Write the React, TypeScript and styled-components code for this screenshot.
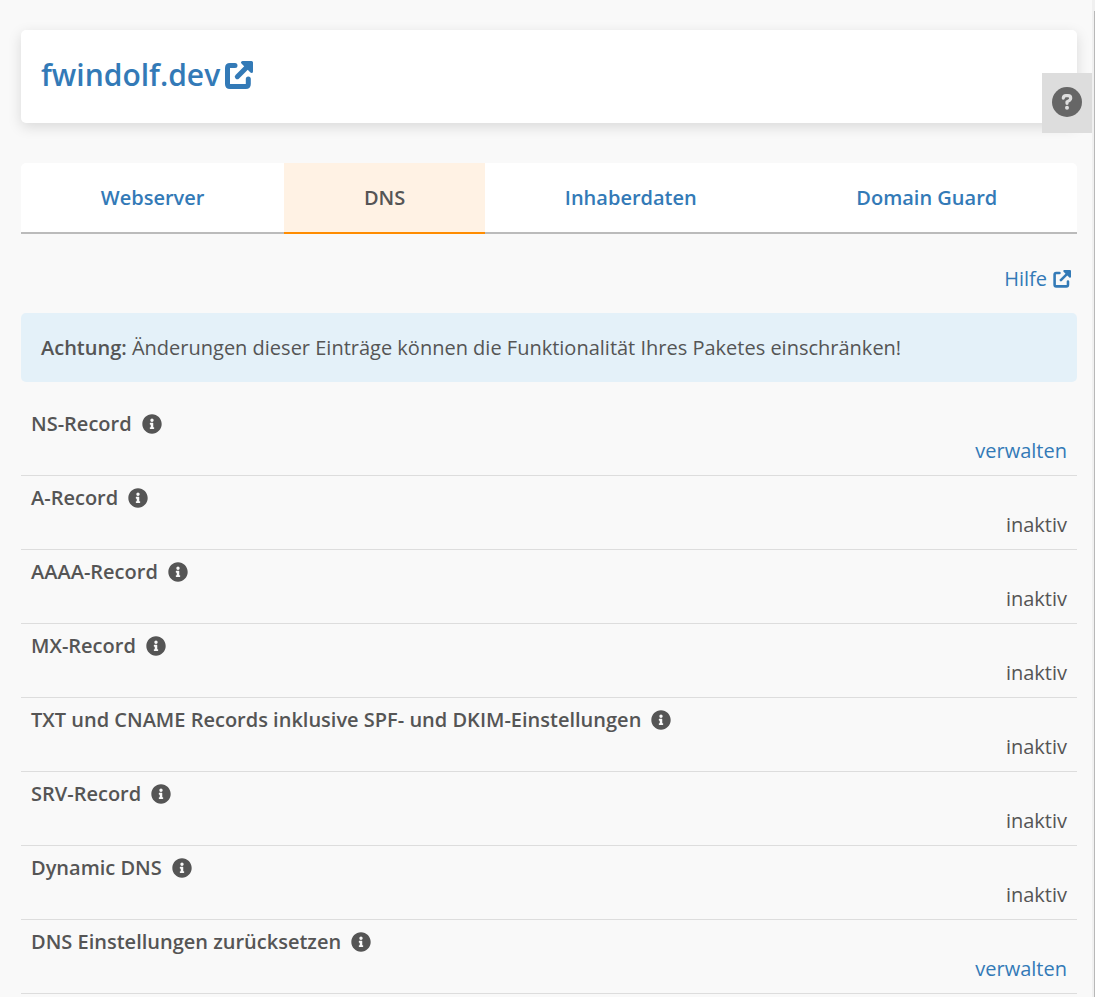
import React from "react";
import styled, { createGlobalStyle } from "styled-components";
import { FaInfoCircle } from "react-icons/fa";

const GlobalStyle = createGlobalStyle`
  * { box-sizing: border-box; }
  body {
    margin: 0;
    background: #f9f9f9;
    color: #555;
    font-family: "Open Sans", sans-serif;
    font-size: 20px;
    font-weight: 400;
    line-height: 28px;
  }
`;

const Page = styled.div`
  display: flex;
  min-height: 100vh;
`;

const Content = styled.main`
  flex: 1;
  min-width: 0;
  padding: 30px 15px 0 21px;
`;

const ScrollGutter = styled.div`
  display: flex;
  justify-content: flex-end;
  width: 3px;
  padding-top: 11px;
  background: #f0f0f0;
`;

const ScrollThumb = styled.div`
  width: 1px;
  background: #b8b8b8;
`;

const TitleCard = styled.header`
  padding: 23px 20px 26px;
  background: #fff;
  border-radius: 5px;
  box-shadow: 0 4px 14px rgba(0, 0, 0, 0.13);
`;

const Title = styled.h1`
  margin: 0;
  font-size: 30px;
  font-weight: 600;
  line-height: 44px;
`;

const Link = styled.a`
  color: #337ab7;
  text-decoration: none;
`;

const IconLink = styled(Link)<{ $gap: number }>`
  display: inline-flex;
  align-items: center;
  gap: ${(p) => p.$gap}px;
`;

const HelpButton = styled.button`
  position: fixed;
  top: 73px;
  right: 3px;
  display: flex;
  align-items: center;
  justify-content: center;
  width: 50px;
  height: 60px;
  padding: 0 0 2px;
  border: 0;
  background: #ddd;
  color: #666;
`;

const Tabs = styled.nav`
  display: flex;
  margin-top: 40px;
  background: #fff;
  border-radius: 5px 5px 0 0;
  overflow: hidden;
`;

const Tab = styled.a<{ $active?: boolean }>`
  flex: 1 1 auto;
  padding: 21px 20px 20px;
  border-bottom: 2px solid ${(p) => (p.$active ? "#ff8c00" : "#bbb")};
  background: ${(p) => (p.$active ? "#fff2e4" : "transparent")};
  color: ${(p) => (p.$active ? "#555" : "#337ab7")};
  font-weight: 600;
  text-align: center;
  text-decoration: none;
`;

const HelpRow = styled.div`
  display: flex;
  justify-content: flex-end;
  padding: 31px 6px 20px;
`;

const Notice = styled.p`
  margin: 0;
  padding: 21px 20px 20px;
  background: #e4f1f9;
  border-radius: 5px;
`;

const Strong = styled.strong`
  font-weight: 600;
`;

const Records = styled.ul`
  margin: 20px 0 0;
  padding: 0;
  list-style: none;
`;

const RecordRow = styled.li`
  padding: 8px 10px 12px;
  border-bottom: 1px solid #ddd;
`;

const RecordName = styled.div`
  display: flex;
  align-items: center;
  gap: 10px;
  font-weight: 600;

  svg { width: 20px; height: 20px; }
`;

const RecordState = styled.div`
  text-align: right;
  line-height: 25px;
`;

const ExternalIcon = ({ size, weight }: { size: number; weight: number }) => (
  <svg width={size} height={size} viewBox="0 0 28 28" fill="none" stroke="currentColor" strokeWidth={weight} strokeLinecap="round" strokeLinejoin="round" aria-hidden="true">
    <path d="M10 4.600H5Q2.500 4.600 2.500 7.100V23Q2.500 25.500 5 25.500H20.800Q23.300 25.500 23.300 23V18" />
    <path d="M12.300 15.700L22 6" />
    <path d="M17.500 1.500H26.500V10.500Z" fill="currentColor" strokeWidth="3" />
  </svg>
);

const QuestionIcon = () => (
  <svg width="30" height="30" viewBox="0 0 30 30" aria-hidden="true">
    <circle cx="15" cy="15" r="15" fill="currentColor" />
    <path d="M11.300 11.200Q11.500 8.700 14 8.700H16Q18.700 8.700 18.700 11.200Q18.700 12.700 17.300 13.500L15 14.900V16.300" fill="none" stroke="#ddd" strokeWidth="3.200" strokeLinecap="round" strokeLinejoin="round" />
    <circle cx="15" cy="20.700" r="2" fill="#ddd" />
  </svg>
);

const records = [
  { name: "NS-Record", managed: true },
  { name: "A-Record" },
  { name: "AAAA-Record" },
  { name: "MX-Record" },
  { name: "TXT und CNAME Records inklusive SPF- und DKIM-Einstellungen" },
  { name: "SRV-Record" },
  { name: "Dynamic DNS" },
  { name: "DNS Einstellungen zurücksetzen", managed: true },
];

const tabs = ["Webserver", "DNS", "Inhaberdaten", "Domain Guard"];

export default function App() {
  return (
    <Page>
      <GlobalStyle />
      <Content>
        <TitleCard>
          <Title>
            <IconLink href="#" $gap={5}>
              fwindolf.dev
              <ExternalIcon size={28} weight={5} />
            </IconLink>
          </Title>
        </TitleCard>
        <Tabs>
          {tabs.map((t) => (
            <Tab key={t} href="#" $active={t === "DNS"} aria-current={t === "DNS" ? "page" : undefined}>
              {t}
            </Tab>
          ))}
        </Tabs>
        <HelpRow>
          <IconLink href="#" $gap={6}>
            Hilfe
            <ExternalIcon size={18} weight={4} />
          </IconLink>
        </HelpRow>
        <Notice>
          <Strong>Achtung:</Strong> Änderungen dieser Einträge können die Funktionalität Ihres Paketes einschränken!
        </Notice>
        <Records>
          {records.map((r) => (
            <RecordRow key={r.name}>
              <RecordName>
                {r.name}
                <FaInfoCircle aria-hidden="true" />
              </RecordName>
              <RecordState>{r.managed ? <Link href="#">verwalten</Link> : "inaktiv"}</RecordState>
            </RecordRow>
          ))}
        </Records>
      </Content>
      <ScrollGutter aria-hidden="true">
        <ScrollThumb />
      </ScrollGutter>
      <HelpButton type="button" aria-label="Hilfe">
        <QuestionIcon />
      </HelpButton>
    </Page>
  );
}
